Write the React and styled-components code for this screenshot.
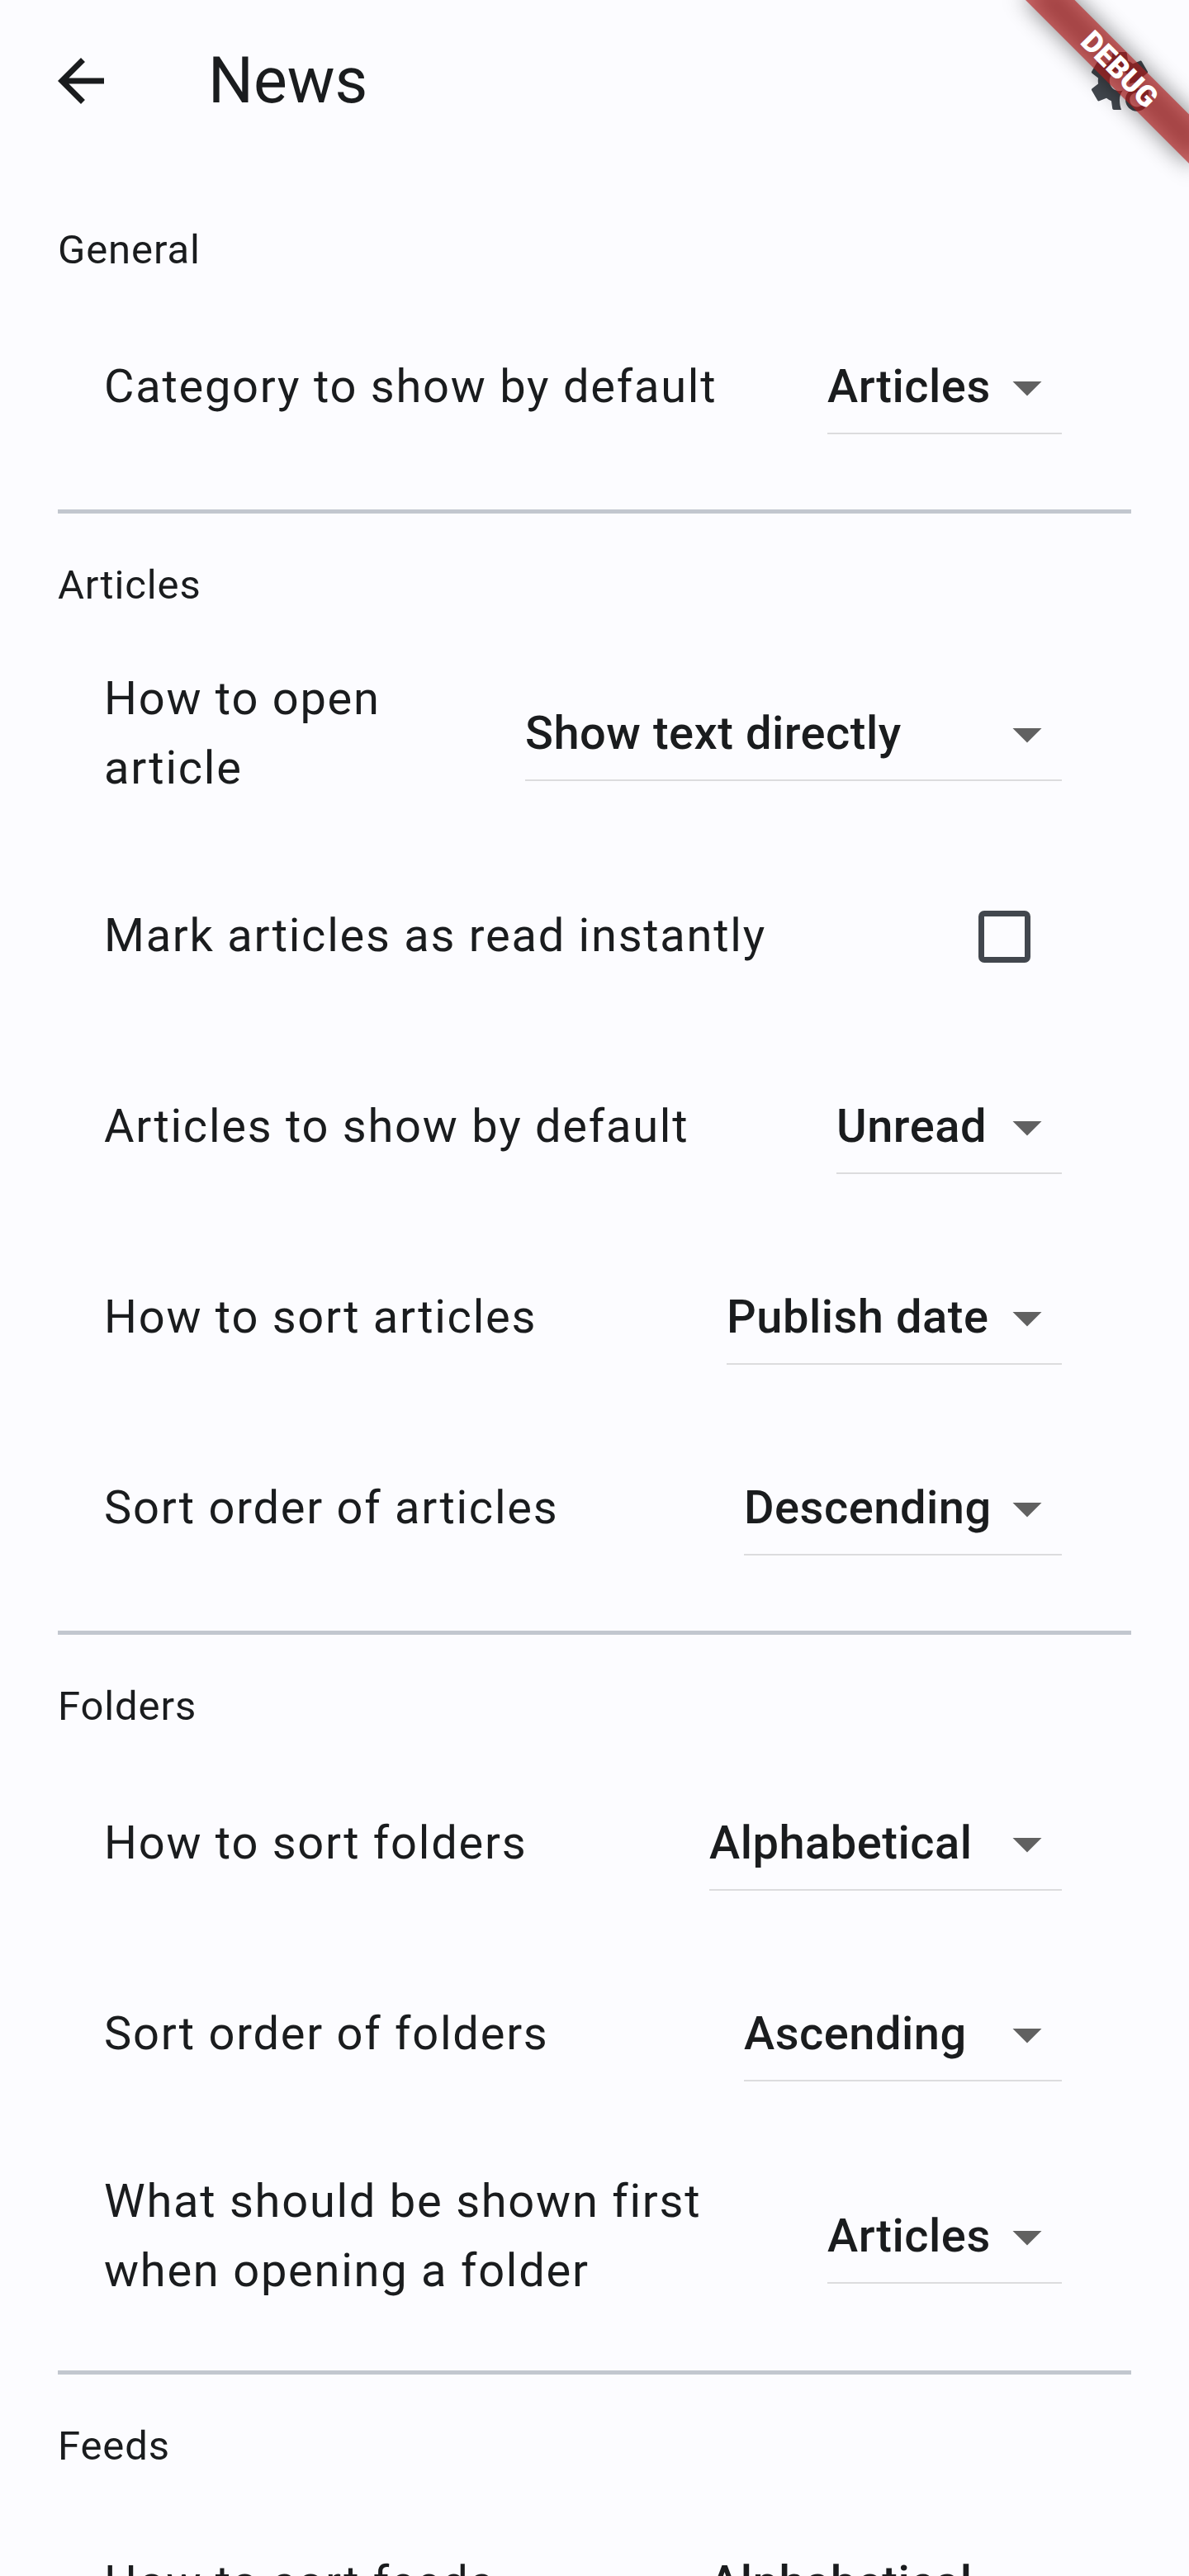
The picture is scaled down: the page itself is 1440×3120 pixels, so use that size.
import React from "react";
import styled, { createGlobalStyle } from "styled-components";

const GlobalStyle = createGlobalStyle`
  *, *::before, *::after { box-sizing: border-box; }
  html, body { margin: 0; padding: 0; background: #fcfcff; }
  body { font-family: Roboto, "Noto Sans", sans-serif; color: #1a1c1e; }
`;

const Screen = styled.div`
  position: relative;
  width: 1440px;
  height: 3120px;
  overflow: hidden;
  background: #fcfcff;
`;

const AppBar = styled.header`
  display: flex;
  align-items: center;
  height: 196px;
  padding: 0 42px 0 56px;
`;

const IconButton = styled.button`
  display: flex;
  padding: 0;
  border: 0;
  background: none;
  color: ${(p) => p.$color};
`;

const Icon = styled.svg`
  display: block;
  width: 84px;
  height: 84px;
  fill: currentColor;
`;

const Title = styled.h1`
  flex: 1;
  margin: 0 0 0 112px;
  font-size: 77px;
  font-weight: 400;
  line-height: 98px;
`;

const Settings = styled.main`
  display: flex;
  flex-direction: column;
  padding: 20px 70px 0;
`;

const Section = styled.section`
  display: flex;
  flex-direction: column;
  padding-bottom: 32.5px;
  border-bottom: 5px solid #c2c7cf;
`;

const SectionTitle = styled.h2`
  margin: 0;
  padding: 51.5px 0 16px;
  font-size: 49px;
  font-weight: 400;
  line-height: 70px;
  letter-spacing: 0.875px;
`;

const Row = styled.div`
  display: flex;
  align-items: center;
  justify-content: space-between;
  gap: 56px;
  height: ${(p) => (p.$tall ? 259 : 231)}px;
  padding: 0 84px 0 56px;
`;

const Label = styled.span`
  flex: 1;
  padding-bottom: 2px;
  font-size: 56px;
  line-height: 84px;
  letter-spacing: 1.75px;
`;

const Select = styled.div`
  display: flex;
  align-items: center;
  justify-content: space-between;
  flex: none;
  width: ${(p) => p.$width}px;
  height: 114px;
  border-bottom: 2px solid #dcdcde;
  font-size: 56px;
  font-weight: 500;
  line-height: 84px;
  letter-spacing: 0.525px;
  white-space: nowrap;
`;

const Arrow = styled(Icon)`
  margin-top: 2px;
  color: #616161;
`;

const Checkbox = styled.span`
  width: 63px;
  height: 63px;
  margin-right: 38.5px;
  border: 7px solid #42474e;
  border-radius: 7px;
`;

const Banner = styled.div`
  position: absolute;
  top: 0;
  right: 0;
  width: 0;
  height: 0;
  transform: rotate(45deg);
`;

const BannerShadow = styled.div`
  position: absolute;
  left: -140px;
  top: 98px;
  width: 280px;
  height: 42px;
  background: rgba(0, 0, 0, 0.5);
  filter: blur(13.9px);
`;

const BannerStrip = styled.div`
  position: absolute;
  left: -140px;
  top: 98px;
  width: 280px;
  height: 42px;
  background: rgba(183, 28, 28, 0.627);
  color: #fff;
  font-size: 35.7px;
  font-weight: 900;
  line-height: 42px;
  text-align: center;
`;

const sections = [
  {
    title: "General",
    rows: [{ label: "Category to show by default", value: "Articles", width: 284 }],
  },
  {
    title: "Articles",
    rows: [
      { label: "How to open article", value: "Show text directly", width: 650, tall: true },
      { label: "Mark articles as read instantly", checkbox: true },
      { label: "Articles to show by default", value: "Unread", width: 273 },
      { label: "How to sort articles", value: "Publish date", width: 406 },
      { label: "Sort order of articles", value: "Descending", width: 385 },
    ],
  },
  {
    title: "Folders",
    rows: [
      { label: "How to sort folders", value: "Alphabetical", width: 427 },
      { label: "Sort order of folders", value: "Ascending", width: 385 },
      { label: "What should be shown first when opening a folder", value: "Articles", width: 284, tall: true },
    ],
  },
  {
    title: "Feeds",
    rows: [{ label: "How to sort feeds", value: "Alphabetical", width: 427 }],
  },
];

function Setting({ row }) {
  return (
    <Row $tall={row.tall}>
      <Label>{row.label}</Label>
      {row.checkbox ? (
        <Checkbox role="checkbox" aria-checked="false" />
      ) : (
        <Select $width={row.width}>
          {row.value}
          <Arrow viewBox="0 0 24 24">
            <path d="M7 10l5 5 5-5z" />
          </Arrow>
        </Select>
      )}
    </Row>
  );
}

export default function App() {
  return (
    <Screen>
      <GlobalStyle />
      <AppBar>
        <IconButton $color="#1a1c1e" aria-label="Back">
          <Icon viewBox="0 0 24 24">
            <path d="M20 11H7.83l5.59-5.59L12 4l-8 8 8 8 1.41-1.41L7.83 13H20v-2z" />
          </Icon>
        </IconButton>
        <Title>News</Title>
        <IconButton $color="#42474e" aria-label="Reset settings">
          <Icon viewBox="0 0 24 24">
            <path d="M12.6 22H10C9.75 22 9.54 21.82 9.5 21.58L9.13 18.93C8.5 18.68 7.96 18.34 7.44 17.94L4.95 18.95C4.73 19.03 4.46 18.95 4.34 18.73L2.34 15.27C2.21 15.05 2.27 14.78 2.46 14.63L4.57 12.97L4.5 12L4.57 11L2.46 9.37C2.27 9.22 2.21 8.95 2.34 8.73L4.34 5.27C4.46 5.05 4.73 4.96 4.95 5.05L7.44 6.05C7.96 5.66 8.5 5.32 9.13 5.07L9.5 2.42C9.54 2.18 9.75 2 10 2H14C14.25 2 14.46 2.18 14.5 2.42L14.87 5.07C15.5 5.32 16.04 5.66 16.56 6.05L19.05 5.05C19.27 4.96 19.54 5.05 19.66 5.27L21.66 8.73C21.78 8.95 21.73 9.22 21.54 9.37L19.43 11L19.5 12L19.43 12.67C18.97 12.56 18.5 12.5 18 12.5C17 12.5 16.1 12.72 15.28 13.1C15.42 12.76 15.5 12.39 15.5 12C15.5 10.07 13.93 8.5 12 8.5S8.5 10.07 8.5 12 10.07 15.5 12 15.5C12.39 15.5 12.76 15.42 13.1 15.28C12.4 16.2 12 17.3 12 18.5C12 19.78 12.2 21 12.6 22Z" />
            <path d="M18 14.5C19.11 14.5 20.11 14.95 20.83 15.67L22 14.5V18.5H18L19.77 16.73C19.32 16.28 18.69 16 18 16C16.62 16 15.5 17.12 15.5 18.5C15.5 19.88 16.62 21 18 21C18.82 21 19.55 20.61 20 20H21.71C21.12 21.47 19.68 22.5 18 22.5C15.79 22.5 14 20.71 14 18.5C14 16.29 15.79 14.5 18 14.5Z" />
          </Icon>
        </IconButton>
      </AppBar>
      <Settings>
        {sections.map((section) => (
          <Section key={section.title}>
            <SectionTitle>{section.title}</SectionTitle>
            {section.rows.map((row) => (
              <Setting key={row.label} row={row} />
            ))}
          </Section>
        ))}
      </Settings>
      <Banner>
        <BannerShadow />
        <BannerStrip>DEBUG</BannerStrip>
      </Banner>
    </Screen>
  );
}
